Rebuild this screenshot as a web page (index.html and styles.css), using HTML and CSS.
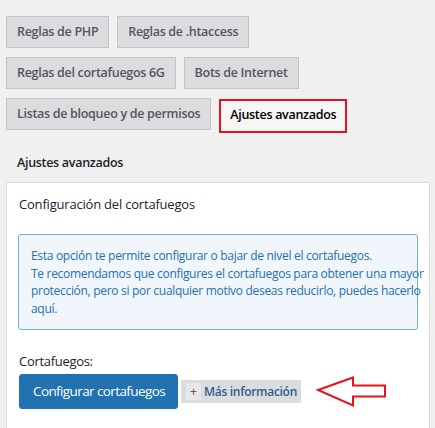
FILE: index.html
```html
<!DOCTYPE html>
<html lang="es">
<head>
<meta charset="utf-8">
<title>Ajustes avanzados</title>
<link rel="stylesheet" href="styles.css">
</head>
<body>
<nav class="tabs">
  <a class="tab">Reglas de PHP</a>
  <a class="tab">Reglas de .htaccess</a>
  <a class="tab">Reglas del cortafuegos 6G</a>
  <a class="tab">Bots de Internet</a>
  <a class="tab">Listas de bloqueo y de permisos</a>
  <a class="tab tab-active">Ajustes avanzados</a>
</nav>
<h2 class="page-title">Ajustes avanzados</h2>
<section class="card">
  <h3 class="card-title">Configuración del cortafuegos</h3>
  <div class="notice">
    <span class="line">Esta opción te permite configurar o bajar de nivel el cortafuegos.</span>
    <span class="line">Te recomendamos que configures el cortafuegos para obtener una mayor</span>
    <span class="line">protección, pero si por cualquier motivo deseas reducirlo, puedes hacerlo</span>
    <span class="line">aquí.</span>
  </div>
  <div class="field-label">Cortafuegos:</div>
  <div class="actions">
    <button class="btn-primary">Configurar cortafuegos</button>
    <span class="more-info"><span class="plus">+</span>Más información</span>
    <svg class="arrow" width="72" height="32" viewBox="0 0 72 32">
      <polygon points="2,14 37,1.5 37,9.5 69,9.5 69,20.5 37,20.5 37,29.5" fill="none" stroke="#e8141c" stroke-width="2"/>
    </svg>
  </div>
</section>
</body>
</html>
```
FILE: styles.css
```css
html, body {
  margin: 0;
  padding: 0;
}
body {
  background: #f0f0f1;
  font-family: "Open Sans", "Noto Sans", sans-serif;
  color: #1d2327;
  height: 428px;
  overflow: hidden;
}
.tabs {
  display: flex;
  flex-wrap: wrap;
  gap: 9px 8px;
  width: 370px;
  padding: 16px 0 0 6px;
}
.tab {
  display: block;
  box-sizing: border-box;
  height: 32px;
  padding: 5px 10px;
  border: 1px solid #c3c4c7;
  background: #dcdcde;
  color: #50575e;
  font-size: 12.5px;
  letter-spacing: -0.3px;
  line-height: 20px;
  font-weight: 600;
}
.tab-active {
  background: #f6f6f7;
  color: #000;
  border: 2px solid #e3141e;
  padding: 4px 9px;
  height: 34px;
  margin-top: 1px;
}
.page-title {
  margin: 20px 0 0 17px;
  font-size: 12.5px;
  letter-spacing: -0.3px;
  line-height: 20px;
  font-weight: 600;
}
.card {
  margin: 9px 5px 0 6px;
  background: #fff;
  border: 1px solid #dcdcde;
  padding: 11px 11px 20px 11px;
}
.card-title {
  margin: 0 0 0 1px;
  font-size: 13px;
  letter-spacing: -0.2px;
  line-height: 20px;
  font-weight: 500;
  color: #1d2327;
}
.notice {
  margin-top: 20px;
  background: #f0f6fc;
  border: 1px solid #72aee6;
  border-radius: 3px;
  padding: 12px 2px 11px 12px;
  color: #2271b1;
  font-size: 12px;
  letter-spacing: -0.3px;
  line-height: 17.7px;
}
.line {
  display: block;
  white-space: nowrap;
}
.field-label {
  margin-top: 21px;
  margin-left: 1px;
  font-size: 13px;
  letter-spacing: -0.3px;
  line-height: 20px;
  font-weight: 500;
}
.actions {
  display: flex;
  align-items: center;
  margin-top: 3px;
}
.btn-primary {
  height: 35px;
  padding: 0 12px 0 13px;
  border: 1px solid #2271b1;
  border-radius: 3px;
  background: #2271b1;
  color: #fff;
  font-family: inherit;
  font-size: 13.5px;
  letter-spacing: -0.6px;
  margin-left: 1px;
}
.more-info {
  display: flex;
  align-items: center;
  height: 23px;
  margin-left: 3px;
  padding: 0 4px 0 5px;
  background: #dcdcde;
  color: #2c5f8e;
  font-size: 12px;
  letter-spacing: -0.3px;
  font-weight: 600;
}
.plus {
  display: inline-flex;
  align-items: center;
  justify-content: center;
  width: 15px;
  height: 17px;
  margin-right: 3px;
  background: #e8e8ea;
  color: #555;
  font-weight: 400;
  letter-spacing: 0;
}
.arrow {
  display: block;
  margin-left: 15px;
  margin-top: 2px;
}
```
